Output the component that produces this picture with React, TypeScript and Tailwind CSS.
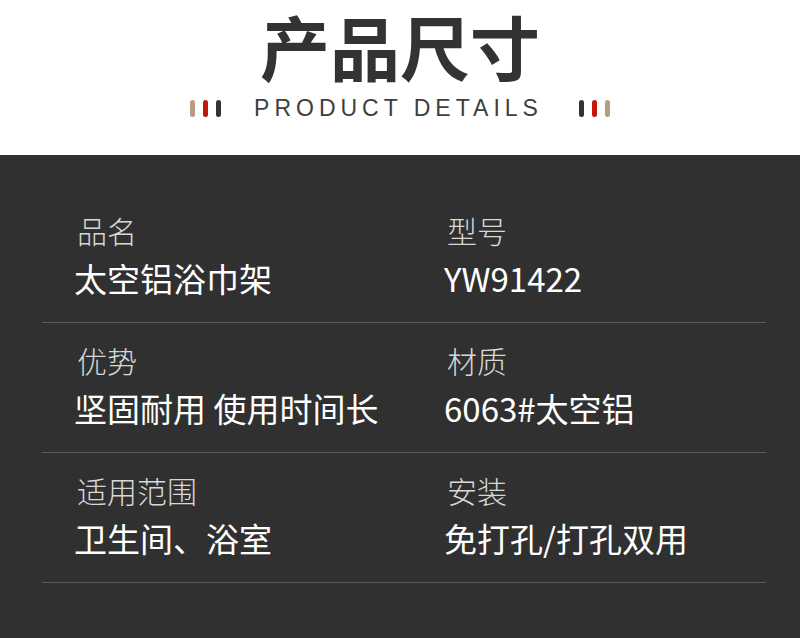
const rows = [
  [
    { label: "品名", value: "太空铝浴巾架" },
    { label: "型号", value: "YW91422" },
  ],
  [
    { label: "优势", value: "坚固耐用 使用时间长" },
    { label: "材质", value: "6063#太空铝" },
  ],
  [
    { label: "适用范围", value: "卫生间、浴室" },
    { label: "安装", value: "免打孔/打孔双用" },
  ],
];

function Pills({ reverse }: { reverse?: boolean }) {
  const colors = ["bg-[#b89c7e]", "bg-[#c0180c]", "bg-[#333333]"];
  const list = reverse ? [...colors].reverse() : colors;
  return (
    <div className="flex gap-[8px]">
      {list.map((c, i) => (
        <span key={i} className={`${c} block w-[5px] h-[17px] rounded-full`} />
      ))}
    </div>
  );
}

export default function App() {
  return (
    <div className="w-[800px] h-[638px] overflow-hidden font-['Noto_Sans_CJK_SC',sans-serif]">
      <div className="h-[155px] bg-white flex flex-col items-center">
        <h1 className="pt-[2px] text-[70px] leading-[88px] font-bold text-[#333333]">产品尺寸</h1>
        <div className="mt-[5px] flex items-center">
          <Pills />
          <span className="ml-[33px] mr-[36px] font-['Liberation_Sans',sans-serif] text-[23px] leading-[26px] tracking-[5px] text-[#3e3e3e]">
            PRODUCT DETAILS
          </span>
          <Pills reverse />
        </div>
      </div>
      <div className="h-[483px] bg-[#303030] pl-[42px] pr-[34px] pt-[38px]">
        {rows.map((row, i) => (
          <div key={i} className="grid grid-cols-[370px_1fr] border-b border-[#5a5a5a] pt-[17px] pb-[24px]">
            {row.map((cell, j) => (
              <div key={j} className="flex flex-col">
                <div className="pl-[35px] text-[30px] leading-[40px] text-[#d8d8d8] font-light">{cell.label}</div>
                <div className="mt-[8px] pl-[32px] text-[33px] leading-[40px] text-white">{cell.value}</div>
              </div>
            ))}
          </div>
        ))}
      </div>
    </div>
  );
}
